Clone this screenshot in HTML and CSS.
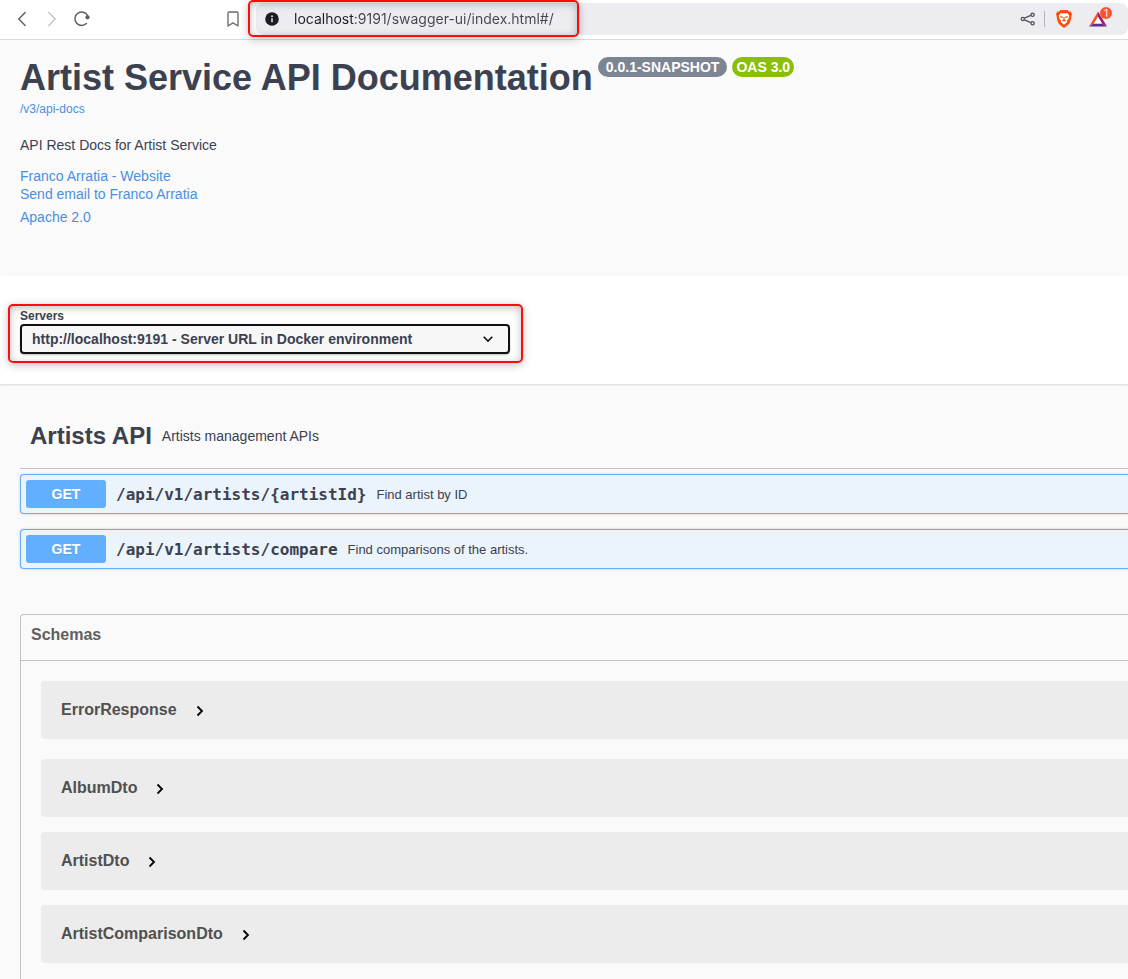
FILE: index.html
```html
<!DOCTYPE html>
<html lang="en">
<head>
<meta charset="utf-8">
<title>Artist Service API Documentation</title>
<link rel="stylesheet" href="styles.css">
</head>
<body>
<header class="toolbar">
  <nav class="toolbar-nav" aria-label="Browser">
    <button class="icon-button" aria-label="Back"><svg width="20" height="20" viewBox="0 0 20 20"><path d="M13.2 3.5 6.8 10l6.4 6.5" fill="none" stroke="#5a5f66" stroke-width="1.4" stroke-linecap="round"/></svg></button>
    <button class="icon-button" aria-label="Forward"><svg width="20" height="20" viewBox="0 0 20 20"><path d="M6.8 3.5 13.2 10l-6.4 6.5" fill="none" stroke="#c4c4c8" stroke-width="1.4" stroke-linecap="round"/></svg></button>
    <button class="icon-button" aria-label="Reload"><svg width="20" height="20" viewBox="0 0 20 20"><path d="M14.400 14.500A6.700 6.700 0 1 1 15.600 6.600" fill="none" stroke="#5a5f66" stroke-width="1.400" stroke-linecap="round"/><circle cx="15.500" cy="8.300" r="2.100" fill="#5a5f66"/></svg></button>
    <button class="icon-button bookmark" aria-label="Bookmark"><svg width="20" height="20" viewBox="0 0 20 20"><path d="M5 4.2Q5 3 6.2 3h7.6Q15 3 15 4.2V17l-5-3.2L5 17z" fill="none" stroke="#6a6e75" stroke-width="1.4" stroke-linejoin="round"/></svg></button>
  </nav>
  <div class="address">
    <div class="address-field highlight">
      <svg width="14" height="14" viewBox="0 0 14 14" aria-hidden="true"><circle cx="7" cy="7" r="6.8" fill="#1c1c22"/><circle cx="7" cy="4.2" r="1" fill="#dcdce2"/><path d="M7 6.3v4" stroke="#dcdce2" stroke-width="1.6"/></svg>
      <input class="url" type="text" aria-label="Address" value="localhost:9191/swagger-ui/index.html#/">
    </div>
    <div class="extensions">
      <button class="icon-button" aria-label="Share"><svg width="20" height="20" viewBox="0 0 20 20" fill="none" stroke="#505258" stroke-width="1.300"><path d="M6.400 9.100l6.400-2.700M6.400 10.900l6.400 2.700"/><circle cx="4.800" cy="10" r="1.600"/><circle cx="14.600" cy="5.700" r="1.600"/><circle cx="14.600" cy="14.300" r="1.600"/></svg></button>
      <span class="divider"></span>
      <button class="icon-button" aria-label="Brave Shields"><svg width="20" height="20" viewBox="0 0 20 20"><path d="M6.400 1h7.200l1.600 1.700 1.600-.2 1.200 2.800-.6 1.600c-.5 4.400-1.400 7.400-3.200 8.800L10 19l-4.200-3.300C4 14.300 3.100 11.300 2.600 6.900L2 5.300l1.200-2.800 1.600.2z" fill="#fb4f09"/><path d="M6.700 4l1.800.5L10 4l1.500.5L13.300 4l1.900 2.800-.5 2.700-1.700 2 .2 1.600L10 15.700l-3.200-2.600.2-1.600-1.700-2-.5-2.700z" fill="#fff"/><path d="M6.300 7l2.700.8-.7 1.200-1.800-.4zM13.700 7l-2.700.8.7 1.200 1.800-.4zM9.500 7.800h1l.2 2.600L12 11.300 10 12.800 8 11.300l1.300-.9z" fill="#fb4f09"/></svg></button>
      <button class="icon-button rewards" aria-label="Brave Rewards"><svg width="20" height="20" viewBox="0 0 20 20"><path d="M10 2.500 1 17.500l5-3L10 8z" fill="#fb542b"/><path d="M1 17.500h18l-5-3H6z" fill="#5b2d90"/><path d="M10 2.500 19 17.500l-5-3L10 8z" fill="#9e1f63"/><path d="M10 8l-4 6.500h8z" fill="#fff"/></svg><span class="count">1</span></button>
    </div>
  </div>
</header>

<main class="docs">
  <section class="info">
    <div class="title-row">
      <h1>Artist Service API Documentation</h1>
      <span class="badge badge-version">0.0.1-SNAPSHOT</span>
      <span class="badge badge-oas">OAS 3.0</span>
    </div>
    <a class="spec-link" href="#docs">/v3/api-docs</a>
    <p class="description">API Rest Docs for Artist Service</p>
    <a class="info-link" href="#website">Franco Arratia - Website</a>
    <a class="info-link" href="#email">Send email to Franco Arratia</a>
    <a class="info-link license" href="#license">Apache 2.0</a>
  </section>

  <section class="scheme">
    <div class="servers highlight">
      <label for="servers">Servers</label>
      <div class="select-wrap">
        <select id="servers"><option>http://localhost:9191 - Server URL in Docker environment</option></select>
        <svg width="12" height="12" viewBox="0 0 12 12" aria-hidden="true"><path d="M1.700 3.800 6 8.100l4.300-4.300" fill="none" stroke="#111" stroke-width="1.600"/></svg>
      </div>
    </div>
  </section>

  <section class="operations">
    <div class="tag">
      <h2>Artists API</h2>
      <p>Artists management APIs</p>
    </div>
    <button class="operation"><span class="method">GET</span><span class="path">/api/v1/artists/{artistId}</span><span class="summary">Find artist by ID</span></button>
    <button class="operation"><span class="method">GET</span><span class="path">/api/v1/artists/compare</span><span class="summary">Find comparisons of the artists.</span></button>
  </section>

  <section class="schemas">
    <h3>Schemas</h3>
    <div class="models">
      <button class="model first">ErrorResponse<svg width="10" height="12" viewBox="0 0 10 12" aria-hidden="true"><path d="M2.500 1.500 7 6l-4.500 4.500" fill="none" stroke="#000" stroke-width="1.800"/></svg></button>
      <button class="model">AlbumDto<svg width="10" height="12" viewBox="0 0 10 12" aria-hidden="true"><path d="M2.500 1.500 7 6l-4.500 4.500" fill="none" stroke="#000" stroke-width="1.800"/></svg></button>
      <button class="model">ArtistDto<svg width="10" height="12" viewBox="0 0 10 12" aria-hidden="true"><path d="M2.500 1.500 7 6l-4.500 4.500" fill="none" stroke="#000" stroke-width="1.800"/></svg></button>
      <button class="model">ArtistComparisonDto<svg width="10" height="12" viewBox="0 0 10 12" aria-hidden="true"><path d="M2.500 1.500 7 6l-4.500 4.500" fill="none" stroke="#000" stroke-width="1.800"/></svg></button>
    </div>
  </section>
</main>
</body>
</html>
```

FILE: styles.css
```css
* { box-sizing: border-box; }

body {
  margin: 0;
  min-height: 100vh;
  display: flex;
  flex-direction: column;
  background: #fafafa;
  color: #3b4151;
  font-family: "Liberation Sans", Arial, sans-serif;
  font-size: 14px;
}

h1, h2, h3, p { margin: 0; }

button {
  border: 0;
  padding: 0;
  background: none;
  color: inherit;
  font: inherit;
  text-align: left;
}

a { color: #4990e2; text-decoration: none; }

.toolbar {
  display: flex;
  height: 40px;
  padding-top: 3px;
  background: #fff;
  border-bottom: 1px solid #dadadc;
}

.toolbar-nav {
  display: flex;
  align-items: center;
  gap: 10px;
  width: 256px;
  height: 32px;
  padding: 0 13px 0 12px;
}

.icon-button { position: relative; width: 20px; height: 20px; }
.icon-button svg { display: block; }
.bookmark { margin-left: auto; }

.address {
  display: flex;
  align-items: center;
  flex: 1;
  height: 32px;
  background: #edecf1;
  border-radius: 8px;
}

.address-field {
  display: flex;
  align-items: center;
  gap: 15px;
  width: 320px;
  height: 32px;
  padding-left: 9px;
}

/* The host name is drawn darker than the rest of the address. */
.url {
  flex: 1;
  min-width: 0;
  border: 0;
  padding: 0;
  color: #45454c;
  background: linear-gradient(90deg, #1c1c22 59px, #45454c 59px);
  background-clip: text;
  -webkit-background-clip: text;
  -webkit-text-fill-color: transparent;
  font: 14px/20px Inter, sans-serif;
  outline: 0;
}

.extensions {
  display: flex;
  align-items: center;
  gap: 10px;
  margin-left: auto;
  padding-right: 20px;
}

.divider { width: 1px; height: 16px; margin: 0 -1px 0 -4px; background: #b4b4bc; }
.rewards { margin-left: 4px; }

.count {
  position: absolute;
  top: -2px;
  right: -4px;
  width: 12px;
  height: 12px;
  border-radius: 6px;
  background: #fb542b;
  color: #fff;
  font: 10px/12px Inter, sans-serif;
  text-align: center;
}

.highlight { position: relative; }
.highlight::after {
  content: "";
  position: absolute;
  inset: -3px -3px -2px -8px;
  border: 2px solid #fb0d0d;
  border-radius: 5px;
  box-shadow: 0 2px 8px rgba(0, 0, 0, .25), inset 0 2px 8px rgba(0, 0, 0, .25);
  pointer-events: none;
}

.docs { display: flex; flex: 1; flex-direction: column; }

.info {
  display: flex;
  flex-direction: column;
  align-items: flex-start;
  padding: 16px 20px 50px;
}

.title-row { display: flex; align-items: flex-start; gap: 5px; }
h1 { font-size: 36px; line-height: 44px; }

.badge {
  margin-top: 1px;
  padding: 0 4px;
  border-radius: 10px;
  color: #fff;
  font-weight: bold;
  line-height: 20px;
}
.badge-version { padding: 0 8px; background: #7d8492; }
.badge-oas { background: #89bf04; }

.spec-link { font-size: 12px; line-height: 18px; }
.description { margin: 18px 0 13px; line-height: 18px; }
.info-link { line-height: 18px; }
.license { margin-top: 5px; }

.scheme {
  padding: 32px 20px 30px;
  background: #fff;
  box-shadow: 0 1px 2px rgba(0, 0, 0, .15);
}

.servers { width: 490px; max-width: 100%; }
.servers::after { inset: -4px -13px -9px -12px; }
.servers label { display: block; font-size: 12px; font-weight: bold; line-height: 16px; }

.select-wrap { display: grid; align-items: center; }
.select-wrap > * { grid-area: 1 / 1; }
.select-wrap svg { justify-self: end; margin-right: 16px; pointer-events: none; }

select {
  appearance: none;
  width: 100%;
  height: 30px;
  padding: 0 40px 0 10px;
  border: 2px solid #111;
  border-radius: 4px;
  background: #f7f7f7;
  box-shadow: 0 1px 2px rgba(0, 0, 0, .25);
  color: #3b4151;
  font: bold 14px "Liberation Sans", Arial, sans-serif;
}

.operations {
  display: flex;
  flex-direction: column;
  gap: 15px;
  padding: 20px 0 45px 20px;
}

.tag {
  display: flex;
  align-items: center;
  gap: 10px;
  height: 65px;
  margin-bottom: -10px;
  padding-left: 10px;
  border-bottom: 1px solid #c1c2c7;
}
h2 { font-size: 24px; }

.operation {
  display: flex;
  align-items: center;
  gap: 10px;
  height: 40px;
  padding: 5px;
  border: 1px solid #61affe;
  border-right: 0;
  border-radius: 4px 0 0 4px;
  background: #ebf3fb;
  box-shadow: 0 0 3px rgba(0, 0, 0, .19);
}

.method {
  width: 80px;
  border-radius: 3px;
  background: #61affe;
  color: #fff;
  font-weight: bold;
  line-height: 28px;
  text-align: center;
  text-shadow: 0 1px 0 rgba(0, 0, 0, .1);
}
.path { font: bold 16px "DejaVu Sans Mono", monospace; }
.summary { font-size: 13px; }

.schemas {
  flex: 1;
  margin-left: 20px;
  border: 1px solid #c1c2c7;
  border-width: 1px 0 0 1px;
  border-radius: 4px 0 0 0;
}
h3 {
  height: 46px;
  padding: 10px;
  border-bottom: 1px solid #c1c2c7;
  color: #606060;
  font-size: 16px;
  line-height: 20px;
}

.models {
  display: flex;
  flex-direction: column;
  gap: 15px;
  padding: 20px 0 15px 20px;
}

.model {
  display: flex;
  align-items: center;
  gap: 18px;
  height: 58px;
  padding: 0 20px;
  border-radius: 4px 0 0 4px;
  background: #ececec;
  color: #505050;
  font-size: 16px;
  font-weight: bold;
}
.first { margin-bottom: 5px; }
.model svg { margin-top: 2px; }
```
